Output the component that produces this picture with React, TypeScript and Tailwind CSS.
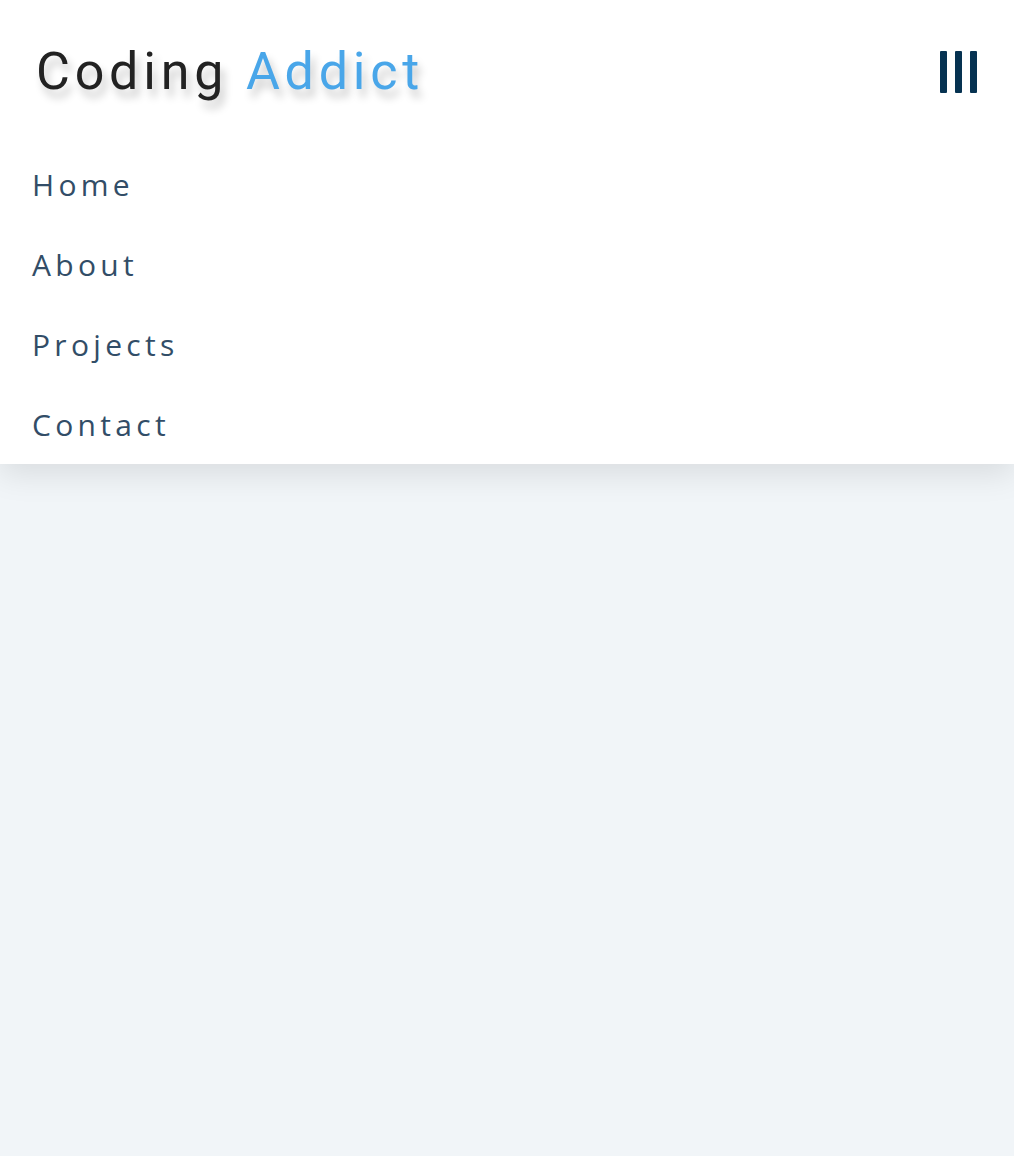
import React, { useState } from 'react';

const links = [
  { id: 1, url: '#home', text: 'Home' },
  { id: 2, url: '#about', text: 'About' },
  { id: 3, url: '#projects', text: 'Projects' },
  { id: 4, url: '#contact', text: 'Contact' },
];

const BarsIcon: React.FC = () => (
  <svg width="38" height="42" viewBox="0 0 38 42" fill="#063251">
    <rect x="0" y="0" width="7" height="42" rx="1" />
    <rect x="15" y="0" width="7" height="42" rx="1" />
    <rect x="30" y="0" width="7" height="42" rx="1" />
  </svg>
);

export default function App() {
  const [showLinks, setShowLinks] = useState(true);

  return (
    <div className="min-h-[1156px] bg-[#f1f5f8]">
      <nav className="bg-white shadow-[0_10px_30px_rgba(0,0,0,0.1)]">
        <div className="flex items-center justify-between h-[144px] pl-[36px] pr-[36px]">
          <h1
            className="text-[52px] leading-none tracking-[4.8px] text-[#222] [text-shadow:4px_8px_8px_rgba(0,0,0,0.22)]"
            style={{ fontFamily: 'Roboto, sans-serif' }}
          >
            Coding <span className="text-[#49a6e9]">Addict</span>
          </h1>
          <button
            onClick={() => setShowLinks(!showLinks)}
            className="flex items-center justify-center"
            aria-label="toggle menu"
          >
            <BarsIcon />
          </button>
        </div>
        {showLinks && (
          <ul style={{ fontFamily: '"Open Sans", sans-serif' }}>
            {links.map((link) => (
              <li key={link.id}>
                <a
                  href={link.url}
                  className="flex items-center h-[80px] px-[32px] text-[30px] tracking-[4.3px] text-[#324d67]"
                >
                  {link.text}
                </a>
              </li>
            ))}
          </ul>
        )}
      </nav>
    </div>
  );
}
